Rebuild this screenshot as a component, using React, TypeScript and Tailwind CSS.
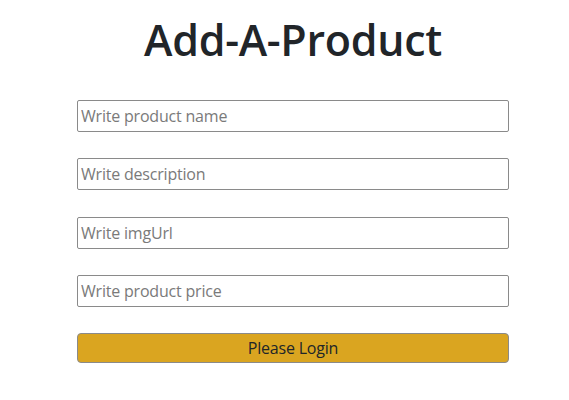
export default function App() {
    const fields = ["Write product name", "Write description", "Write imgUrl", "Write product price"]

    return (
        <div className="w-[569px] h-[400px] bg-white font-['Open_Sans',sans-serif] text-[#212529]">
            <div className="pl-[77px] pt-[14px] w-[509px]">
                <h1 className="text-center text-[43px] leading-[52px] font-semibold tracking-[-0.3px]">Add-A-Product</h1>
                <form className="flex flex-col gap-[26.33px] mt-[34px]" onSubmit={(e) => e.preventDefault()}>
                    {fields.map((f) => (
                        <input
                            key={f}
                            placeholder={f}
                            className="w-[432px] h-[32px] px-[3px] border border-[#8a8a8a] rounded-[2px] text-[16px] tracking-[-0.2px] placeholder:text-[#7a7a7a] outline-none"
                        />
                    ))}
                    <button className="w-[432px] h-[30px] bg-[#daa520] border border-[#8a8a8a] rounded-[4px] text-[16px] tracking-[-0.2px] text-[#212529]">
                        Please Login
                    </button>
                </form>
            </div>
        </div>
    )
}
